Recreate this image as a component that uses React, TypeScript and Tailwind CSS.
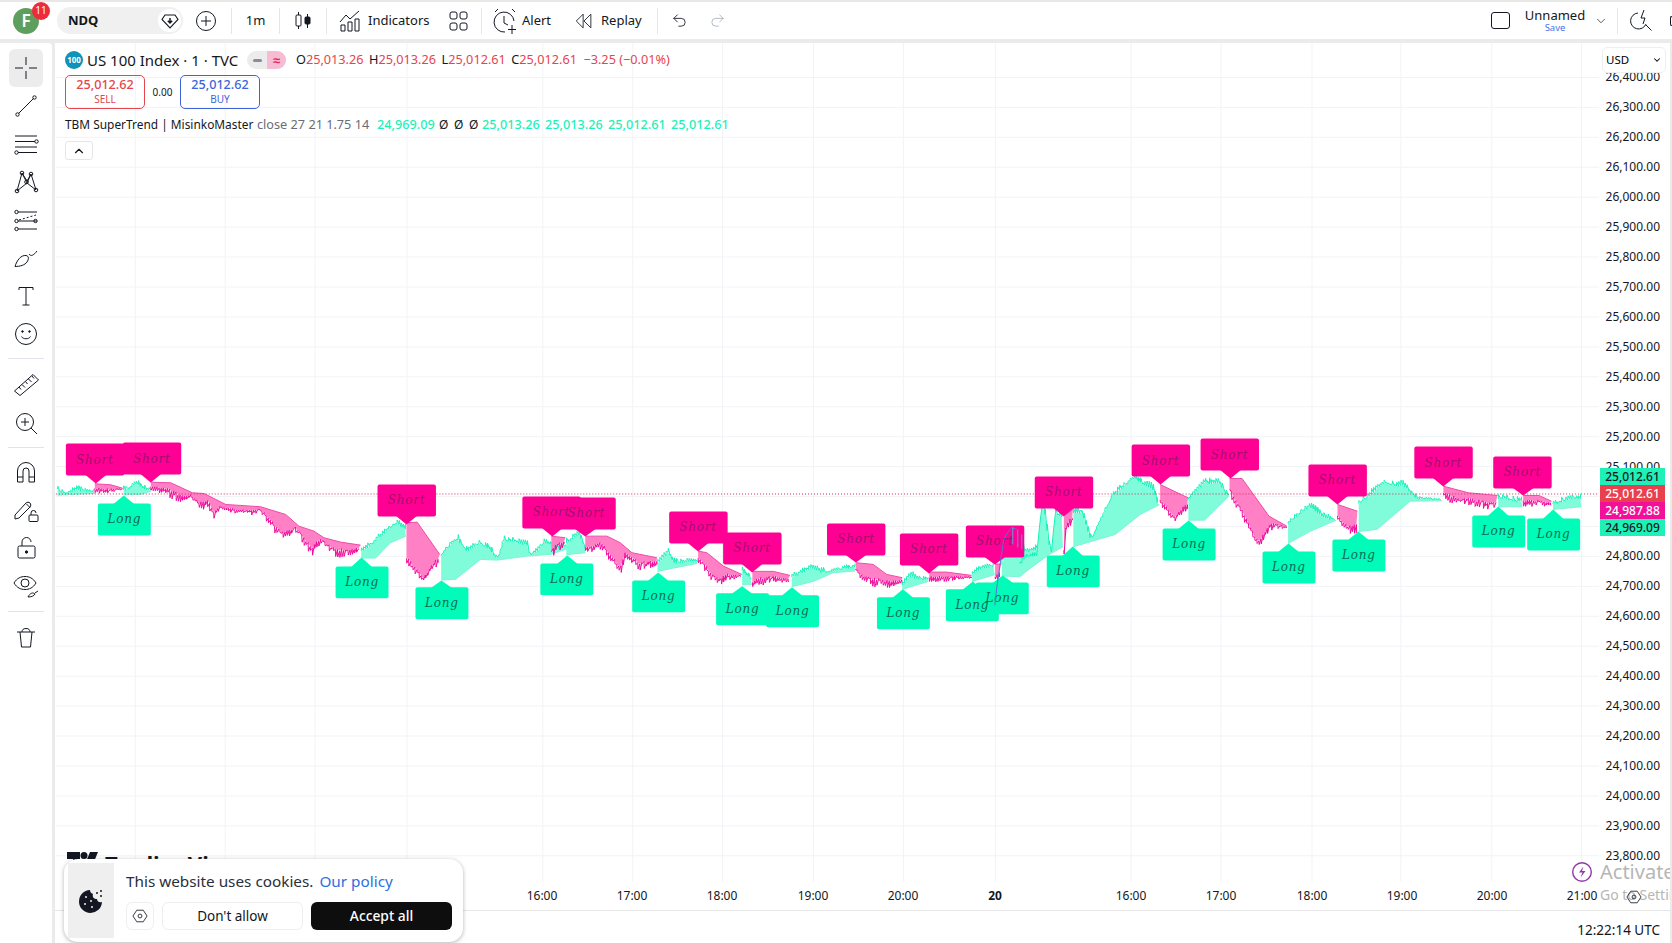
import { ReactNode } from "react";
import { ChevronDown, ChevronUp, Redo2, Undo2 } from "lucide-react";

// chart coordinates are page pixels, read off the screenshot
type Pt = [number, number];
interface Seg {
  kind: "up" | "down";
  env: Pt[];
  trend: Pt[];
}

const z4 = (p: Pt[]): Pt[] => p.map(([x, y]) => [50 + x / 3, 430 + y / 3]);
const z5 = (p: Pt[]): Pt[] => p.map(([x, y]) => [540 + x / 3, 470 + y / 3]);
const z6 = (p: Pt[]): Pt[] => p.map(([x, y]) => [1020 + x / 2.405, 430 + y / 3]);

const SEGS: Seg[] = [
  { kind: "up", env: z4([[20, 170], [45, 190], [75, 165], [110, 180], [132, 178]]), trend: z4([[20, 197], [132, 192]]) },
  { kind: "down", env: z4([[132, 192], [170, 195], [215, 180]]), trend: z4([[132, 163], [180, 166], [215, 176]]) },
  { kind: "up", env: z4([[218, 168], [260, 152], [300, 178]]), trend: z4([[218, 196], [270, 195], [300, 185]]) },
  {
    kind: "down",
    env: z4([[300, 182], [330, 192], [370, 212], [400, 220], [420, 205], [445, 248], [470, 232], [490, 272], [510, 242], [600, 262], [625, 245], [660, 298], [690, 332], [735, 310], [782, 382], [810, 342], [860, 387], [930, 368]]),
    trend: z4([[300, 158], [360, 160], [425, 190], [460, 192], [525, 225], [630, 232], [705, 255], [745, 290], [790, 305], [820, 325], [870, 338], [930, 347]]),
  },
  { kind: "up", env: z4([[932, 350], [1000, 300], [1040, 265], [1066, 285]]), trend: z4([[932, 386], [975, 386], [1020, 340], [1066, 320]]) },
  { kind: "down", env: z4([[1068, 410], [1095, 435], [1120, 462], [1168, 405]]), trend: z4([[1068, 280], [1100, 278], [1168, 375]]) },
  {
    kind: "up",
    env: z4([[1172, 365], [1220, 312], [1250, 350], [1285, 332], [1320, 345], [1340, 385], [1360, 318], [1430, 332], [1440, 375], [1480, 328], [1530, 342], [1590, 352]]),
    trend: z4([[1172, 452], [1215, 450], [1290, 390], [1340, 392], [1430, 380], [1500, 375], [1590, 345]]),
  },
  { kind: "down", env: z5([[33, 265], [55, 245], [75, 225]]), trend: z5([[33, 200], [75, 205]]) },
  { kind: "up", env: z5([[78, 205], [115, 182], [135, 225]]), trend: z5([[78, 256], [135, 250]]) },
  {
    kind: "down",
    env: z5([[135, 252], [180, 240], [240, 316], [255, 265], [300, 306], [350, 288]]),
    trend: z5([[135, 200], [200, 200], [240, 220], [275, 250], [350, 265]]),
  },
  { kind: "up", env: z5([[352, 270], [385, 233], [400, 265], [472, 268]]), trend: z5([[352, 306], [400, 296], [472, 282]]) },
  { kind: "down", env: z5([[474, 282], [510, 330], [540, 346], [605, 320]]), trend: z5([[474, 245], [500, 250], [550, 290], [605, 315]]) },
  { kind: "up", env: z5([[606, 292], [635, 320]]), trend: z5([[606, 346], [635, 346]]) },
  { kind: "down", env: z5([[637, 356], [700, 338], [750, 344]]), trend: z5([[637, 306], [700, 306], [750, 318]]) },
  { kind: "up", env: z5([[755, 308], [815, 284], [870, 300], [945, 278]]), trend: z5([[755, 352], [820, 336], [880, 310], [945, 305]]) },
  { kind: "down", env: z5([[947, 320], [1000, 352], [1040, 358], [1087, 342]]), trend: z5([[947, 280], [1000, 285], [1040, 315], [1087, 325]]) },
  { kind: "up", env: z5([[1087, 335], [1110, 303], [1165, 325]]), trend: z5([[1087, 360], [1165, 336]]) },
  { kind: "down", env: z5([[1168, 338], [1220, 336], [1295, 326]]), trend: z5([[1168, 308], [1220, 308], [1295, 318]]) },
  { kind: "up", env: z5([[1297, 298], [1365, 272]]), trend: z5([[1297, 336], [1365, 316]]) },
  { kind: "down", env: z5([[1366, 335], [1384, 330]]), trend: z5([[1366, 284], [1384, 284]]) },
  { kind: "up", env: z5([[1386, 268], [1400, 240], [1420, 186], [1440, 180], [1456, 238], [1500, 220]]), trend: z5([[1386, 320], [1440, 322], [1500, 270]]) },
  {
    kind: "up",
    env: z6([[0, 390], [15, 372], [40, 368], [55, 190], [62, 250], [75, 372], [85, 235], [104, 255]]),
    trend: z6([[0, 440], [70, 376], [104, 352]]),
  },
  { kind: "down", env: z6([[106, 375], [112, 300], [128, 285]]), trend: z6([[106, 248], [128, 236]]) },
  { kind: "up", env: z6([[129, 235], [150, 232], [172, 322], [225, 180], [275, 135], [320, 160], [336, 224]]), trend: z6([[129, 352], [230, 315], [290, 255], [336, 226]]) },
  { kind: "down", env: z6([[338, 236], [375, 278], [405, 240]]), trend: z6([[338, 165], [405, 205]]) },
  { kind: "up", env: z6([[406, 200], [445, 145], [480, 146], [503, 195]]), trend: z6([[406, 272], [445, 272], [503, 200]]) },
  { kind: "down", env: z6([[505, 200], [575, 356], [610, 300], [643, 296]]), trend: z6([[505, 147], [535, 147], [600, 260], [643, 290]]) },
  { kind: "up", env: z6([[646, 265], [700, 218], [762, 270]]), trend: z6([[646, 342], [700, 305], [762, 272]]) },
  { kind: "down", env: z6([[765, 275], [790, 312], [813, 312]]), trend: z6([[765, 225], [813, 245]]) },
  { kind: "up", env: z6([[816, 208], [870, 152], [925, 152], [960, 200], [1016, 208]]), trend: z6([[816, 306], [860, 300], [940, 215], [1016, 214]]) },
  { kind: "down", env: z6([[1020, 216], [1130, 240], [1150, 232]]), trend: z6([[1020, 170], [1080, 190], [1150, 198]]) },
  { kind: "up", env: z6([[1152, 194], [1210, 200]]), trend: z6([[1152, 232], [1210, 232]]) },
  { kind: "down", env: z6([[1212, 232], [1280, 230]]), trend: z6([[1212, 198], [1250, 198], [1280, 215]]) },
  { kind: "up", env: z6([[1284, 208], [1352, 190]]), trend: z6([[1284, 240], [1352, 232]]) },
];

// [left, top, tipX, tipY]
const SHORTS: number[][] = [
  [65, 444, 95, 484], [122, 443, 150, 483], [377, 485, 406, 525], [522, 497, 552, 537],
  [557, 498, 585, 537], [669, 512, 698, 552], [723, 533, 752, 573], [827, 524, 856, 563],
  [900, 534, 929, 574], [966, 526, 995, 565], [1035, 477, 1064, 517], [1132, 445, 1161, 485],
  [1201, 439, 1231, 479], [1309, 465, 1338, 505], [1415, 447, 1444, 487], [1494, 457, 1524, 496],
];
const LONGS: number[][] = [
  [97, 504, 123, 496], [335, 567, 361, 558], [415, 588, 441, 581], [540, 564, 567, 556],
  [632, 581, 658, 573], [716, 594, 742, 587], [766, 596, 792, 588], [877, 598, 903, 590],
  [946, 590, 973, 582], [976, 583, 1003, 576], [1047, 556, 1073, 547], [1163, 529, 1189, 521],
  [1263, 552, 1289, 544], [1333, 540, 1359, 532], [1473, 516, 1499, 507], [1528, 519, 1554, 510],
];

const V_LINES = [134, 224, 314, 406, 542, 632, 722, 813, 903, 995, 1131, 1221, 1312, 1401, 1492, 1582];
const PRICES = Array.from({ length: 27 }, (_, i) => (26400 - i * 100).toLocaleString("en-US") + ".00");
const TICKS: [number, string][] = [
  [542, "16:00"], [632, "17:00"], [722, "18:00"], [813, "19:00"], [903, "20:00"], [995, "20"],
  [1131, "16:00"], [1221, "17:00"], [1312, "18:00"], [1402, "19:00"], [1492, "20:00"], [1582, "21:00"],
];

function lerp(pts: Pt[], x: number) {
  if (x <= pts[0][0]) return pts[0][1];
  for (let i = 1; i < pts.length; i++) {
    if (x <= pts[i][0]) {
      const [x0, y0] = pts[i - 1];
      const [x1, y1] = pts[i];
      return y0 + ((y1 - y0) * (x - x0)) / (x1 - x0);
    }
  }
  return pts[pts.length - 1][1];
}

// the fill stops at a "body" line, thin wicks then run out to the envelope
function bars(seg: Seg, n: number) {
  const x0 = seg.env[0][0];
  const x1 = seg.env[seg.env.length - 1][0];
  const body: Pt[] = [];
  const saw: Pt[] = [];
  let i = 0;
  for (let x = x0; x <= x1; x += 2.1, i++) {
    const e = lerp(seg.env, x);
    const t = lerp(seg.trend, x);
    const sign = t > e ? 1 : -1;
    const r = Math.abs(Math.sin((i + n * 17) * 12.9898) * 43758.5453) % 1;
    const r2 = Math.abs(Math.sin((i + n * 5) * 78.233) * 12543.1234) % 1;
    const slow = 0.5 + 0.5 * Math.abs(Math.sin(i * 0.19 + n));
    const depth = Math.min(Math.abs(t - e) * 0.6, (seg.kind === "up" ? 5 : 8) * slow + 1.5);
    const b = e + sign * depth * (0.7 + 0.3 * r2);
    const tip = e + sign * depth * r * r * 0.8;
    body.push([x, b]);
    saw.push([x, b], [x + 0.3, tip]);
  }
  return { body, saw };
}

const d = (p: Pt[]) => p.map(([x, y], i) => `${i ? "L" : "M"}${x.toFixed(1)} ${y.toFixed(1)}`).join("");

function Band({ seg, n }: { seg: Seg; n: number }) {
  const { body, saw } = bars(seg, n);
  const up = seg.kind === "up";
  const area = d([...body, ...[...seg.trend].reverse()]) + "Z";
  return (
    <g>
      <path d={area} fill={up ? "#80fcdb" : "#ff80c4"} />
      <path d={d(saw)} fill="none" stroke={up ? "#14f2b8" : "#f0089a"} strokeWidth={1} />
      <path d={d(seg.trend)} fill="none" stroke={up ? "#7df5d5" : "#f04aa8"} strokeWidth={1} />
    </g>
  );
}

function TagText({ x, y, fill, label }: { x: number; y: number; fill: string; label: string }) {
  return (
    <text x={x} y={y} textAnchor="middle" fill={fill} fontSize={12} fontStyle="italic" fontFamily="'DejaVu Serif', serif" letterSpacing={0.8}>
      {label}
    </text>
  );
}

function Chart() {
  return (
    <svg viewBox="55 43 1545 840" width={1545} height={840} className="block">
      {V_LINES.map((x) => (
        <line key={x} x1={x + 0.5} x2={x + 0.5} y1={43} y2={883} stroke="#f1f3f6" />
      ))}
      {PRICES.map((p, i) => (
        <line key={p} x1={55} x2={1600} y1={77.5 + i * 29.97} y2={77.5 + i * 29.97} stroke="#f1f3f6" />
      ))}
      {SEGS.map((s, i) => (
        <Band key={i} seg={s} n={i} />
      ))}
      <line x1={55} x2={1600} y1={494.5} y2={494.5} stroke="#d8265f" strokeWidth={1} strokeDasharray="1 2" />
      {LONGS.map(([l, t, tx, ty], i) => (
        <g key={i} fill="#00fcb8">
          <rect x={l} y={t} width={53} height={32} rx={2} />
          <path d={`M${tx - 11} ${t + 1}L${tx} ${ty}L${tx + 11} ${t + 1}Z`} />
        </g>
      ))}
      {LONGS.map(([l, t], i) => (
        <TagText key={i} x={l + 26.5} y={t + 20} fill="#0b6b55" label="Long" />
      ))}
      {SHORTS.map(([l, t, tx, ty], i) => (
        <g key={i} fill="#ff0094">
          <rect x={l} y={t} width={58.5} height={32} rx={2} />
          <path d={`M${tx - 11} ${t + 31}L${tx} ${ty}L${tx + 11} ${t + 31}Z`} />
        </g>
      ))}
      {SHORTS.map(([l, t], i) => (
        <TagText key={i} x={l + 29} y={t + 20} fill="#a3106c" label="Short" />
      ))}
      {/* the blue wick that runs over the labels near the "20" tick */}
      <path d="M995 606L997 588L1001 560L1004 540L1008 533L1012 528L1017 530" fill="none" stroke="#5b6fd0" strokeWidth={1} />
      <path d="M1013 528V545M1018 530V548M1022 535V550" stroke="#5f9fd8" strokeWidth={1} />
    </svg>
  );
}

function Ico({ children, size = 28 }: { children: ReactNode; size?: number }) {
  return (
    <svg width={size} height={size} viewBox="0 0 28 28" fill="none" stroke="#131722" strokeWidth={1} className="shrink-0">
      {children}
    </svg>
  );
}

const TOOLS_A: ReactNode[] = [
  <path key="a" d="M14 3v8M14 17v8M3 14h8M17 14h8" />,
  <g key="b">
    <path d="M6.5 21.5L21.5 6.5" />
    <circle cx="5.5" cy="22.5" r="1.7" />
    <circle cx="22.5" cy="5.5" r="1.7" />
  </g>,
  <g key="c">
    <path d="M3 6h22M3 11.5h20M3 17h22M6 22.5h19" />
    <circle cx="24.5" cy="11.5" r="1.7" />
    <circle cx="4.5" cy="22.5" r="1.7" />
  </g>,
  <g key="d">
    <path d="M5 23L10 5L15 15L19 6L24 22L15 15L5 23M10 5L15 13L19 6" />
    <circle cx="5" cy="23" r="1.8" />
    <circle cx="10" cy="5" r="1.8" />
    <circle cx="14.5" cy="14" r="1.8" />
    <circle cx="19" cy="6" r="1.8" />
    <circle cx="24" cy="22" r="1.8" />
  </g>,
  <g key="e">
    <path d="M6 6h19M6 15h19M6 23h19" />
    <path d="M7 14l17-5" strokeDasharray="2 2" />
    <circle cx="4.5" cy="6" r="1.7" />
    <circle cx="4.5" cy="15" r="1.7" />
    <circle cx="4.5" cy="23" r="1.7" />
    <circle cx="23.5" cy="15" r="1.7" />
  </g>,
  <g key="f">
    <path d="M3 22.5C5 16 9 11 14 11.5C17 12 17 15 15 18C13 21 8 22.5 3 22.5Z" />
    <path d="M17 10C19 13 22 11 25 7" />
  </g>,
  <path key="g" d="M7 8V5.5h14V8M14 5.5V23M10.5 23h7" />,
  <g key="h">
    <circle cx="14" cy="14" r="10.5" />
    <path d="M9.5 16.5C11 19.5 17 19.5 18.5 16.5" />
    <circle cx="10.5" cy="11.5" r="0.8" fill="#131722" />
    <circle cx="17.5" cy="11.5" r="0.8" fill="#131722" />
  </g>,
];
const TOOLS_B: ReactNode[] = [
  <g key="a">
    <path d="M2.5 21L21 4.5L26.5 10L8 25.5Z" />
    <path d="M7 17l2 2.5M10 14.5l3 3M13.5 11.5l2 2.5M16.5 9l3 3M20 6l2 2.5" />
  </g>,
  <g key="b">
    <circle cx="13" cy="13" r="8.5" />
    <path d="M19 19l6 6M9 13h8M13 9v8" />
  </g>,
];
const TOOLS_C: ReactNode[] = [
  <g key="a">
    <path d="M5.5 24V13a8.5 8.5 0 0 1 17 0v11h-5.5V13a3 3 0 0 0-6 0v11Z" />
    <path d="M5.5 19h5.5M17 19h5.5" />
  </g>,
  <g key="b">
    <path d="M3 19L14 7C15 6 17 6 18 7C19 8 19 10 18 11L7 22L3 23Z" />
    <path d="M14.5 8l3.5 3.5" />
    <rect x="17" y="19" width="9" height="6.5" rx="1" />
    <path d="M19 19v-2a2.5 2.5 0 0 1 5 0" />
  </g>,
  <g key="c">
    <rect x="6" y="12" width="17" height="12" rx="1.5" />
    <path d="M10 12V8a4.5 4.5 0 0 1 9 0" />
    <circle cx="14.5" cy="18" r="1.2" fill="#131722" />
  </g>,
  <g key="d">
    <path d="M2 11C5 6 9 4.5 13 4.5S21 6 24 11C21 16 17 17.5 13 17.5S5 16 2 11Z" />
    <circle cx="13" cy="11" r="4" />
    <path d="M16 25C18 21 21 20 23 22C22 24 19 25 16 25ZM23 21l3-2" />
  </g>,
];

function Toolbar() {
  const btn = (node: ReactNode, i: number, active = false) => (
    <div
      key={i}
      className={`mx-auto flex h-[38px] w-[34px] shrink-0 items-center justify-center rounded-md ${active ? "bg-[#ececec]" : ""}`}
    >
      {node}
    </div>
  );
  return (
    <aside className="flex h-full w-[52px] shrink-0 flex-col rounded-tr bg-white pt-[6px]">
      <div className="flex flex-col">{TOOLS_A.map((t, i) => btn(<Ico>{t}</Ico>, i, i === 0))}</div>
      <div className="mx-[8px] mb-[6px] mt-[5px] h-px bg-[#e0e3eb]" />
      <div className="flex flex-col gap-px">{TOOLS_B.map((t, i) => btn(<Ico>{t}</Ico>, i))}</div>
      <div className="mx-[8px] my-[5px] h-px bg-[#e0e3eb]" />
      <div className="flex flex-col">{TOOLS_C.map((t, i) => btn(<Ico>{t}</Ico>, i))}</div>
      <div className="mx-[8px] mb-[6px] mt-[6px] h-px bg-[#e0e3eb]" />
      {btn(
        <Ico>
          <path d="M5 9h18M8 9l1.5 15h9L20 9M10 9c0-2 1-3.5 4-3.5S18 7 18 9" />
        </Ico>,
        0,
      )}
    </aside>
  );
}

const Sep = () => <div className="h-[26px] w-px bg-[#e6e6e6]" />;

function Header() {
  return (
    <header className="flex h-[39px] shrink-0 items-center border-t-2 border-[#e8e8e6] bg-white text-[13px] text-[#131722]">
      <div className="relative ml-[13px] flex h-[26px] w-[26px] items-center justify-center rounded-full bg-[#5f9f5e] text-[17px] font-semibold text-white">
        F
        <span className="absolute left-[19px] top-[-6px] flex h-[18px] w-[18px] items-center justify-center rounded-full bg-[#ed2b3c] text-[10px] font-normal">
          11
        </span>
      </div>
      <div className="ml-[18px] flex h-[27px] w-[126px] items-center justify-between rounded-full bg-[#f0f0f0] pl-[11px] pr-[2px] font-bold">
        NDQ
        <span className="flex h-[23px] w-[23px] items-center justify-center rounded-full bg-white">
          <svg width="18" height="18" viewBox="0 0 18 18" fill="none" stroke="#131722" strokeWidth="1.1">
            <path d="M4 3h10l3 4.5L9 16L1 7.5Z" />
            <path d="M9 6v5M6.8 8.8L9 11l2.2-2.2" strokeWidth="1.5" />
          </svg>
        </span>
      </div>
      <div className="ml-[13px] flex h-[20px] w-[20px] items-center justify-center rounded-full border border-[#131722]">
        <svg width="10" height="10" viewBox="0 0 10 10" stroke="#131722">
          <path d="M5 0v10M0 5h10" />
        </svg>
      </div>
      <div className="ml-[15px]">
        <Sep />
      </div>
      <span className="w-[47px] text-center">1m</span>
      <Sep />
      <div className="flex w-[46px] justify-center">
        <Ico>
          <path d="M9.5 5v3M9.5 19v3M18.5 7v3M18.5 17v4" />
          <rect x="7" y="8" width="5" height="11" rx="1" />
          <rect x="16" y="10" width="5" height="7" rx="1" fill="#131722" />
        </Ico>
      </div>
      <Sep />
      <div className="ml-[9px]">
        <Ico>
          <path d="M4 15l6-7 4 4 9-8" />
          <path d="M5 18h4v6H5zM12 15h4v9h-4zM19 12h4v12h-4z" />
        </Ico>
      </div>
      <span className="ml-[4px] w-[76px]">Indicators</span>
      <Ico>
        <rect x="6" y="5" width="7" height="7" rx="2" />
        <rect x="16" y="5" width="7" height="7" rx="2" />
        <rect x="6" y="16" width="7" height="7" rx="2" />
        <rect x="16" y="16" width="7" height="7" rx="2" />
      </Ico>
      <div className="ml-[9px]">
        <Sep />
      </div>
      <div className="ml-[9px]">
        <Ico>
          <path d="M14 25A10 10 0 1 1 23 14" />
          <path d="M13 9v7l4 2M4 5l3-3M21 2l3 3M21 18v9M17 22.5h8" />
        </Ico>
      </div>
      <span className="ml-[3px] w-[38px]">Alert</span>
      <div className="ml-[12px]">
        <Ico size={24}>
          <path d="M13 6L5 14l8 8ZM22 6l-8 8 8 8Z" />
        </Ico>
      </div>
      <span className="ml-[5px] w-[44px]">Replay</span>
      <div className="ml-[12px]">
        <Sep />
      </div>
      <Undo2 size={17} strokeWidth={1.2} className="ml-[13px]" />
      <Redo2 size={17} strokeWidth={1.2} color="#a8adb8" className="ml-[21px]" />
      <div className="ml-auto h-[17px] w-[19px] rounded-[3px] border-[1.5px] border-[#131722]" />
      <div className="ml-[15px] flex w-[60px] flex-col items-center leading-none">
        <span className="text-[13px]">Unnamed</span>
        <span className="mt-[1px] text-[9.5px] text-[#4a72e8]">Save</span>
      </div>
      <ChevronDown size={14} strokeWidth={1.2} className="ml-[9px]" />
      <div className="ml-[9px]">
        <Sep />
      </div>
      <div className="ml-[9px]">
        <Ico>
          <path d="M19 17a8 8 0 1 1-8-11M19 18l5.5 5.5" />
          <path d="M17 3l-3 8h4l-2 6" />
        </Ico>
      </div>
      <div className="ml-[15px] h-[10px] w-[2px] rounded-l-full border border-r-0 border-[#131722]" />
    </header>
  );
}

function Legend() {
  const red = "text-[#e4454f]";
  const mint = "text-[#1ff0b8]";
  return (
    <div className="absolute left-[10px] top-[7px] text-[#131722]">
      <div className="flex h-[20px] items-center">
        <span className="flex h-[18px] w-[18px] items-center justify-center rounded-full bg-[#0f93b8] text-[8px] font-bold text-white">
          100
        </span>
        <span className="ml-[4px] w-[160px] text-[15px]">US 100 Index · 1 · TVC</span>
        <span className="flex h-[18px] w-[39px] overflow-hidden rounded-full bg-[#ececec]">
          <span className="flex w-[20px] items-center justify-center">
            <span className="h-[3px] w-[9px] rounded bg-[#8a8d94]" />
          </span>
          <span className="flex w-[19px] items-center justify-center bg-[#f7bcd3] text-[13px] font-bold leading-none text-[#e91e63]">
            ≈
          </span>
        </span>
        <div className="ml-[10px] flex gap-[5.5px] text-[12.7px]">
          <span>
            O<span className={red}>25,013.26</span>
          </span>
          <span>
            H<span className={red}>25,013.26</span>
          </span>
          <span>
            L<span className={red}>25,012.61</span>
          </span>
          <span>
            C<span className={red}>25,012.61</span>
          </span>
          <span className={`ml-[1px] ${red}`}>−3.25 (−0.01%)</span>
        </div>
      </div>
      <div className="mt-[5px] flex h-[34px] items-center">
        <div className="flex h-full w-[80px] flex-col items-center justify-center rounded-[5px] border border-[#e4454f] pb-[2px] text-[#e4454f]">
          <span className="text-[12.6px] font-medium leading-[15px]">25,012.62</span>
          <span className="text-[10px] leading-[14px]">SELL</span>
        </div>
        <span className="w-[35px] text-center text-[10px]">0.00</span>
        <div className="flex h-full w-[80px] flex-col items-center justify-center rounded-[5px] border border-[#3f64d8] pb-[2px] text-[#3f64d8]">
          <span className="text-[12.6px] font-medium leading-[15px]">25,012.62</span>
          <span className="text-[10px] leading-[14px]">BUY</span>
        </div>
      </div>
      <div className="mt-[7px] flex h-[18px] items-center whitespace-nowrap text-[12.7px]">
        <span className="w-[192px] text-[11.9px]">TBM SuperTrend | MisinkoMaster</span>
        <span className="w-[120px] text-[#6a6d78]">close 27 21 1.75 14</span>
        <span className={`w-[62px] font-medium ${mint}`}>24,969.09</span>
        <span className="w-[15px] text-[12px]">Ø</span>
        <span className="w-[15px] text-[12px]">Ø</span>
        <span className="w-[13px] text-[12px]">Ø</span>
        <span className={`w-[63px] font-medium ${mint}`}>25,013.26</span>
        <span className={`w-[63px] font-medium ${mint}`}>25,013.26</span>
        <span className={`w-[63px] font-medium ${mint}`}>25,012.61</span>
        <span className={`font-medium ${mint}`}>25,012.61</span>
      </div>
      <div className="mt-[7px] flex h-[19px] w-[28px] items-center justify-center rounded-[3px] border border-[#e6e6e6] bg-white">
        <ChevronUp size={14} strokeWidth={2} />
      </div>
    </div>
  );
}

function HexGear({ size = 28 }: { size?: number }) {
  return (
    <svg width={size} height={size} viewBox="0 0 28 28" fill="none" stroke="#131722" strokeWidth="1.3">
      <path d="M9 5h10l6 9-6 9H9l-6-9Z" />
      <circle cx="14" cy="14" r="3" />
    </svg>
  );
}

function CookieBanner() {
  return (
    <div className="absolute bottom-px left-[9px] flex h-[83px] w-[399px] rounded-[14px] bg-white p-[4px] shadow-[0_1px_4px_rgba(0,0,0,0.3)]">
      <div className="flex w-[46px] items-center justify-center bg-[#efefef]">
        <svg width="26" height="26" viewBox="0 0 26 26">
          <path d="M12 2a11.5 11.5 0 1 0 12 12c-3 1-5-1-5-3-3 0-5-2-4-5-2-1-3-2-3-4Z" fill="#131722" />
          <g fill="#efefef">
            <circle cx="8" cy="9" r="1" />
            <circle cx="13" cy="13" r="1" />
            <circle cx="7" cy="16" r="1" />
            <circle cx="14" cy="19" r="1" />
          </g>
          <g fill="#131722">
            <circle cx="19" cy="5" r="1" />
            <circle cx="23" cy="3" r="1" />
            <circle cx="23" cy="8" r="1" />
          </g>
        </svg>
      </div>
      <div className="ml-[12px] flex flex-col">
        <p className="mt-[7px] text-[15.3px] leading-[22px] text-[#2a2e39]">
          This website uses cookies. <span className="ml-[2px] text-[#2d6fe0]">Our policy</span>
        </p>
        <div className="mt-[10px] flex gap-[8px]">
          <button className="flex h-[28px] w-[28px] items-center justify-center rounded-md border border-[#eeeeee]">
            <HexGear size={18} />
          </button>
          <button className="h-[28px] w-[141px] rounded-md border border-[#eeeeee] text-[13.5px] text-[#131722]">
            Don't allow
          </button>
          <button className="h-[28px] w-[141px] rounded-md bg-[#0e0e0e] text-[13.8px] font-medium text-white">
            Accept all
          </button>
        </div>
      </div>
    </div>
  );
}

const TAGS = [
  ["25,012.61", "bg-[#1ff0b8] text-[#131722]"],
  ["25,012.61", "bg-[#e8404c] text-white"],
  ["24,987.88", "bg-[#f2109a] text-white"],
  ["24,969.09", "bg-[#1ff0b8] text-[#131722]"],
];

function PriceAxis() {
  return (
    <div className="relative h-full w-[70px] shrink-0 overflow-hidden">
      <div className="flex flex-col pr-[10px] pt-[19px] text-right text-[12px] text-[#131722]">
        {PRICES.map((p) => (
          <div key={p} className="flex h-[29.97px] shrink-0 items-center justify-end">
            {p}
          </div>
        ))}
      </div>
      <div className="absolute left-[2px] top-[4px] flex h-[26px] w-[64px] items-center justify-between rounded-[5px] border border-[#eeeeee] bg-white px-[3px] text-[11.5px]">
        USD
        <ChevronDown size={10} strokeWidth={2.5} />
      </div>
      <div className="absolute left-0 top-[425px] flex w-[65px] flex-col">
        {TAGS.map(([v, c], i) => (
          <div key={i} className={`flex h-[17px] items-center justify-center text-[12px] font-medium ${c}`}>
            {v}
          </div>
        ))}
      </div>
    </div>
  );
}

function TimeAxis() {
  return (
    <div className="flex h-[28px] items-center text-[12px] text-[#131722]">
      {TICKS.map(([x, label], i) => (
        <span
          key={i}
          className={`w-[40px] shrink-0 text-center ${label === "20" ? "font-bold" : ""}`}
          style={{ marginLeft: i ? x - TICKS[i - 1][0] - 40 : x - 20 - 55 }}
        >
          {label}
        </span>
      ))}
    </div>
  );
}

export default function App() {
  return (
    <div
      className="flex h-[943px] w-[1672px] flex-col overflow-hidden bg-[#ebebeb]"
      style={{ fontFamily: "'Noto Sans', sans-serif" }}
    >
      <Header />
      <div className="mt-[4px] flex min-h-0 flex-1">
        <Toolbar />
        <main className="relative ml-[3px] mr-[2px] flex min-w-0 flex-1 flex-col bg-white">
          <div className="flex h-[868px] border-b border-[#e6e6e6]">
            <div className="flex w-[1545px] shrink-0 flex-col">
              <Chart />
              <TimeAxis />
            </div>
            <PriceAxis />
          </div>
          <div className="flex flex-1 items-center justify-end pr-[10px] pt-[6px] text-[13.5px] text-[#131722]">
            12:22:14 UTC
          </div>
          <Legend />
          <div className="absolute left-[12px] top-[809px] flex items-start gap-[7px] text-[22px] font-bold leading-none text-[#131722]">
            <svg width="31" height="17" viewBox="0 0 31 17" fill="#131722">
              <path d="M0 0h13v17H6V7H0Z" />
              <circle cx="17" cy="3.5" r="3.5" />
              <path d="M23 0h8l-7 17h-8Z" />
            </svg>
            TradingView
          </div>
          <CookieBanner />
          {/* windows activation watermark lies over the axis */}
          <div className="pointer-events-none absolute left-[1517px] top-[814px] flex w-[98px] items-center overflow-hidden">
            <svg width="20" height="20" viewBox="0 0 20 20" fill="none" stroke="#8e3aa8" strokeWidth="1.4" className="mr-[8px] shrink-0">
              <circle cx="10" cy="10" r="9.3" />
              <path d="M11.5 4.5L7 10.5h3.5L8.5 15.5l5-6.5H10Z" fill="#8e3aa8" stroke="none" />
            </svg>
            <span className="whitespace-nowrap text-[20px] text-[#b6b6b6]">Activate</span>
          </div>
          <div className="pointer-events-none absolute left-[1545px] top-[841px] flex w-[70px] items-center overflow-hidden whitespace-nowrap text-[14px] text-[#b6b6b6]">
            Go to Settings
          </div>
          <div className="absolute left-[1570px] top-[845px]">
            <HexGear size={18} />
          </div>
        </main>
      </div>
    </div>
  );
}
